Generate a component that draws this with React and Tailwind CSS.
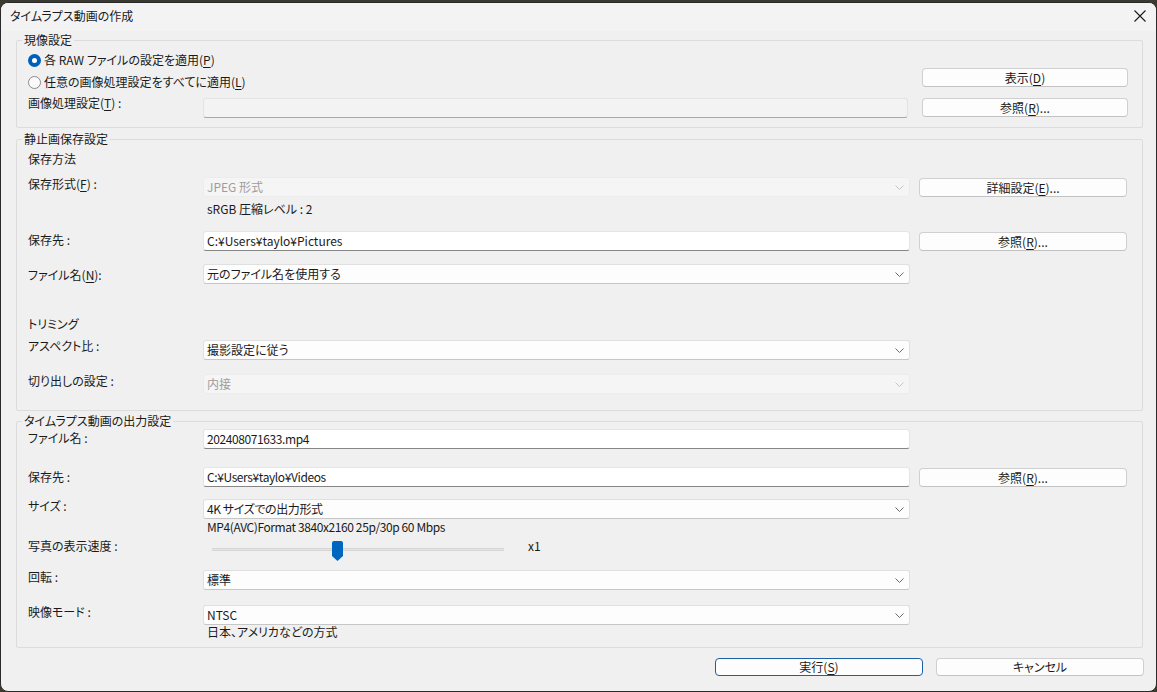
import React from "react";

const font = "font-['Noto_Sans_CJK_JP','Noto_Sans',sans-serif] [font-feature-settings:'palt']";

function Chevron({ disabled }) {
  return (
    <svg width="9" height="5" viewBox="0 0 9 5" className="shrink-0">
      <path d="M0.5 0.5 L4.5 4.5 L8.5 0.5" fill="none" stroke={disabled ? "#c4c4c4" : "#6a6a6a"} strokeWidth="1" />
    </svg>
  );
}

function Btn({ children, primary, className = "" }) {
  return (
    <div
      className={`flex items-center justify-center rounded-[4px] border bg-[#fdfdfd] text-[12px] leading-none text-[#1a1a1a] ${
        primary ? "border-[#1c5fa6]" : "border-[#d0d0d0] border-b-[#c2c2c2]"
      } ${className}`}
    >
      {children}
    </div>
  );
}

function TextBox({ value, w = "w-[707px]", narrow }) {
  return (
    <div
      className={`${w} h-[20px] shrink-0 rounded-[3px] border border-[#e5e5e5] border-b-[#868686] bg-white pl-[3px] text-[12px] leading-[18px] text-[#1a1a1a] ${
        narrow ? "tracking-[-0.4px]" : ""
      }`}
    >
      {value}
    </div>
  );
}

function Select({ value, disabled, narrow }) {
  return (
    <div
      className={`flex w-[707px] h-[20px] shrink-0 items-center justify-between rounded-[3px] border pl-[3px] pr-[5px] text-[12px] leading-[18px] ${
        disabled
          ? "border-[#ececec] bg-[#f5f5f5] text-[#9d9d9d]"
          : "border-[#e0e0e0] border-b-[#c6c6c6] bg-[#fdfdfd] text-[#1a1a1a]"
      } ${narrow ? "tracking-[-0.4px]" : ""}`}
    >
      <span>{value}</span>
      <Chevron disabled={disabled} />
    </div>
  );
}

function Row({ label, lab = "mt-[2px]", className = "", children, button }) {
  return (
    <div className={`flex items-start ${className}`}>
      <div className={`w-[175px] shrink-0 h-[16px] leading-[16px] ${lab}`}>{label}</div>
      {children}
      {button && <Btn className="ml-[9px] mt-[1px] w-[208px] h-[19px]">{button}</Btn>}
    </div>
  );
}

function Radio({ checked, children }) {
  return (
    <div className="flex h-[22px] items-center">
      {checked ? (
        <span className="flex h-[13px] w-[13px] items-center justify-center rounded-full bg-[#005fb8]">
          <span className="h-[5px] w-[5px] rounded-full bg-white" />
        </span>
      ) : (
        <span className="h-[13px] w-[13px] rounded-full border border-[#8a8a8a] bg-[#fafafa]" />
      )}
      <span className="ml-[3px] leading-[16px]">{children}</span>
    </div>
  );
}

const U = ({ children }) => <span className="underline underline-offset-2">{children}</span>;

function Group({ title, className = "", children }) {
  return (
    <fieldset className={`ml-[15px] w-[1127px] rounded-[2px] border border-[#dcdcdc] ${className}`}>
      <legend className="ml-[5px] px-[2px] h-[16px] leading-[16px]">{title}</legend>
      {children}
    </fieldset>
  );
}

export default function App() {
  return (
    <div className={`w-[1157px] h-[692px] bg-[#3a3a30] pt-[2px] overflow-hidden ${font} text-[12px] text-[#1a1a1a]`}>
      <div className="h-[690px] rounded-[8px] border border-[#2a2a2a] bg-[#f0f0f0] overflow-hidden">
        {/* title bar */}
        <div className="flex h-[28px] items-start justify-between bg-[#f3f3f3] pl-[9px] pr-[10px]">
          <span className="mt-[5px] leading-[16px]">タイムラプス動画の作成</span>
          <svg width="12" height="12" viewBox="0 0 12 12" className="mt-[7px]">
            <path d="M0.5 0.5 L11.5 11.5 M11.5 0.5 L0.5 11.5" stroke="#1a1a1a" strokeWidth="1.1" />
          </svg>
        </div>

        {/* 現像設定 */}
        <Group title="現像設定" className="mt-[1px] pb-[9px]">
          <div className="flex">
            <div className="flex flex-col pl-[11px] pt-[1px]">
              <Radio checked>
                各 RAW ファイルの設定を適用(<U>P</U>)
              </Radio>
              <Radio>
                任意の画像処理設定をすべてに適用(<U>L</U>)
              </Radio>
              <div className="mt-[5px] flex items-start">
                <div className="w-[175px] h-[16px] leading-[16px] mt-[-3px]">
                  画像処理設定(<U>T</U>) :
                </div>
                <div className="w-[705px] h-[20px] rounded-[3px] border border-[#e3e3e3] border-b-[#a8a8a8] bg-[#f3f3f3]" />
              </div>
            </div>
            <div className="ml-[14px] flex flex-col gap-[11px] pt-[20px]">
              <Btn className="w-[206px] h-[19px]">
                表示(<U>D</U>)
              </Btn>
              <Btn className="w-[206px] h-[19px]">
                参照(<U>R</U>)...
              </Btn>
            </div>
          </div>
        </Group>

        {/* 静止画保存設定 */}
        <Group title="静止画保存設定" className="mt-[3px] pb-[16px]">
          <div className="flex flex-col pl-[11px]">
            <div className="mt-[4px] h-[16px] leading-[16px]">保存方法</div>
            <Row
              className="mt-[10px]"
              lab="mt-[-1px]"
              label={<>保存形式(<U>F</U>) :</>}
              button={<>詳細設定(<U>E</U>)...</>}
            >
              <Select value="JPEG 形式" disabled />
            </Row>
            <div className="mt-[4px] ml-[179px] h-[16px] leading-[16px]">sRGB 圧縮レベル : 2</div>
            <Row className="mt-[14px]" lab="mt-[1px]" label="保存先 :" button={<>参照(<U>R</U>)...</>}>
              <TextBox value="C:¥Users¥taylo¥Pictures" />
            </Row>
            <Row className="mt-[13px]" lab="mt-[3px]" label={<>ファイル名(<U>N</U>):</>}>
              <Select value="元のファイル名を使用する" />
            </Row>
            <div className="mt-[32px] h-[16px] leading-[16px]">トリミング</div>
            <Row className="mt-[8px]" lab="mt-[-2px]" label="アスペクト比 :">
              <Select value="撮影設定に従う" />
            </Row>
            <Row className="mt-[14px]" lab="mt-[-1px]" label="切り出しの設定 :">
              <Select value="内接" disabled />
            </Row>
          </div>
        </Group>

        {/* タイムラプス動画の出力設定 */}
        <Group title="タイムラプス動画の出力設定" className="mt-[2px] pb-[7px]">
          <div className="flex flex-col pl-[11px]">
            <Row className="mt-[0px]" lab="mt-[1px]" label="ファイル名 :">
              <TextBox value="202408071633.mp4" narrow />
            </Row>
            <Row className="mt-[18px]" lab="mt-[2px]" label="保存先 :" button={<>参照(<U>R</U>)...</>}>
              <TextBox value="C:¥Users¥taylo¥Videos" narrow />
            </Row>
            <Row className="mt-[12px]" lab="mt-[-1px]" label="サイズ :">
              <Select value="4K サイズでの出力形式" narrow />
            </Row>
            <div className="ml-[179px] h-[16px] leading-[16px] tracking-[-0.4px]">
              MP4(AVC)Format 3840x2160 25p/30p 60 Mbps
            </div>
            <div className="mt-[3px] flex h-[24px] items-start">
              <div className="w-[175px] shrink-0 h-[16px] leading-[16px]">写真の表示速度 :</div>
              <div className="relative ml-[9px] h-[24px] w-[292px]">
                <div className="mt-[10px] h-[3px] w-[292px] rounded-[1px] border border-[#d4d4d4] bg-[#e6e6e6]" />
                <svg width="11" height="20" viewBox="0 0 11 20" className="absolute left-[120px] top-[3px]">
                  <path d="M0 2 Q0 0 2 0 H9 Q11 0 11 2 V15 L5.5 20 L0 15 Z" fill="#0067c0" />
                </svg>
              </div>
              <div className="ml-[24px] h-[16px] leading-[16px]">x1</div>
            </div>
            <Row className="mt-[8px]" lab="mt-[-1px]" label="回転 :">
              <Select value="標準" />
            </Row>
            <Row className="mt-[15px]" lab="mt-[-1px]" label="映像モード :">
              <Select value="NTSC" />
            </Row>
            <div className="ml-[179px] mt-[-1px] h-[16px] leading-[16px]">日本、アメリカなどの方式</div>
          </div>
        </Group>

        {/* footer */}
        <div className="mt-[10px] flex justify-end gap-[13px] pr-[12px]">
          <Btn primary className="w-[208px] h-[18px]">
            実行(<U>S</U>)
          </Btn>
          <Btn className="w-[208px] h-[18px]">キャンセル</Btn>
        </div>
      </div>
    </div>
  );
}
